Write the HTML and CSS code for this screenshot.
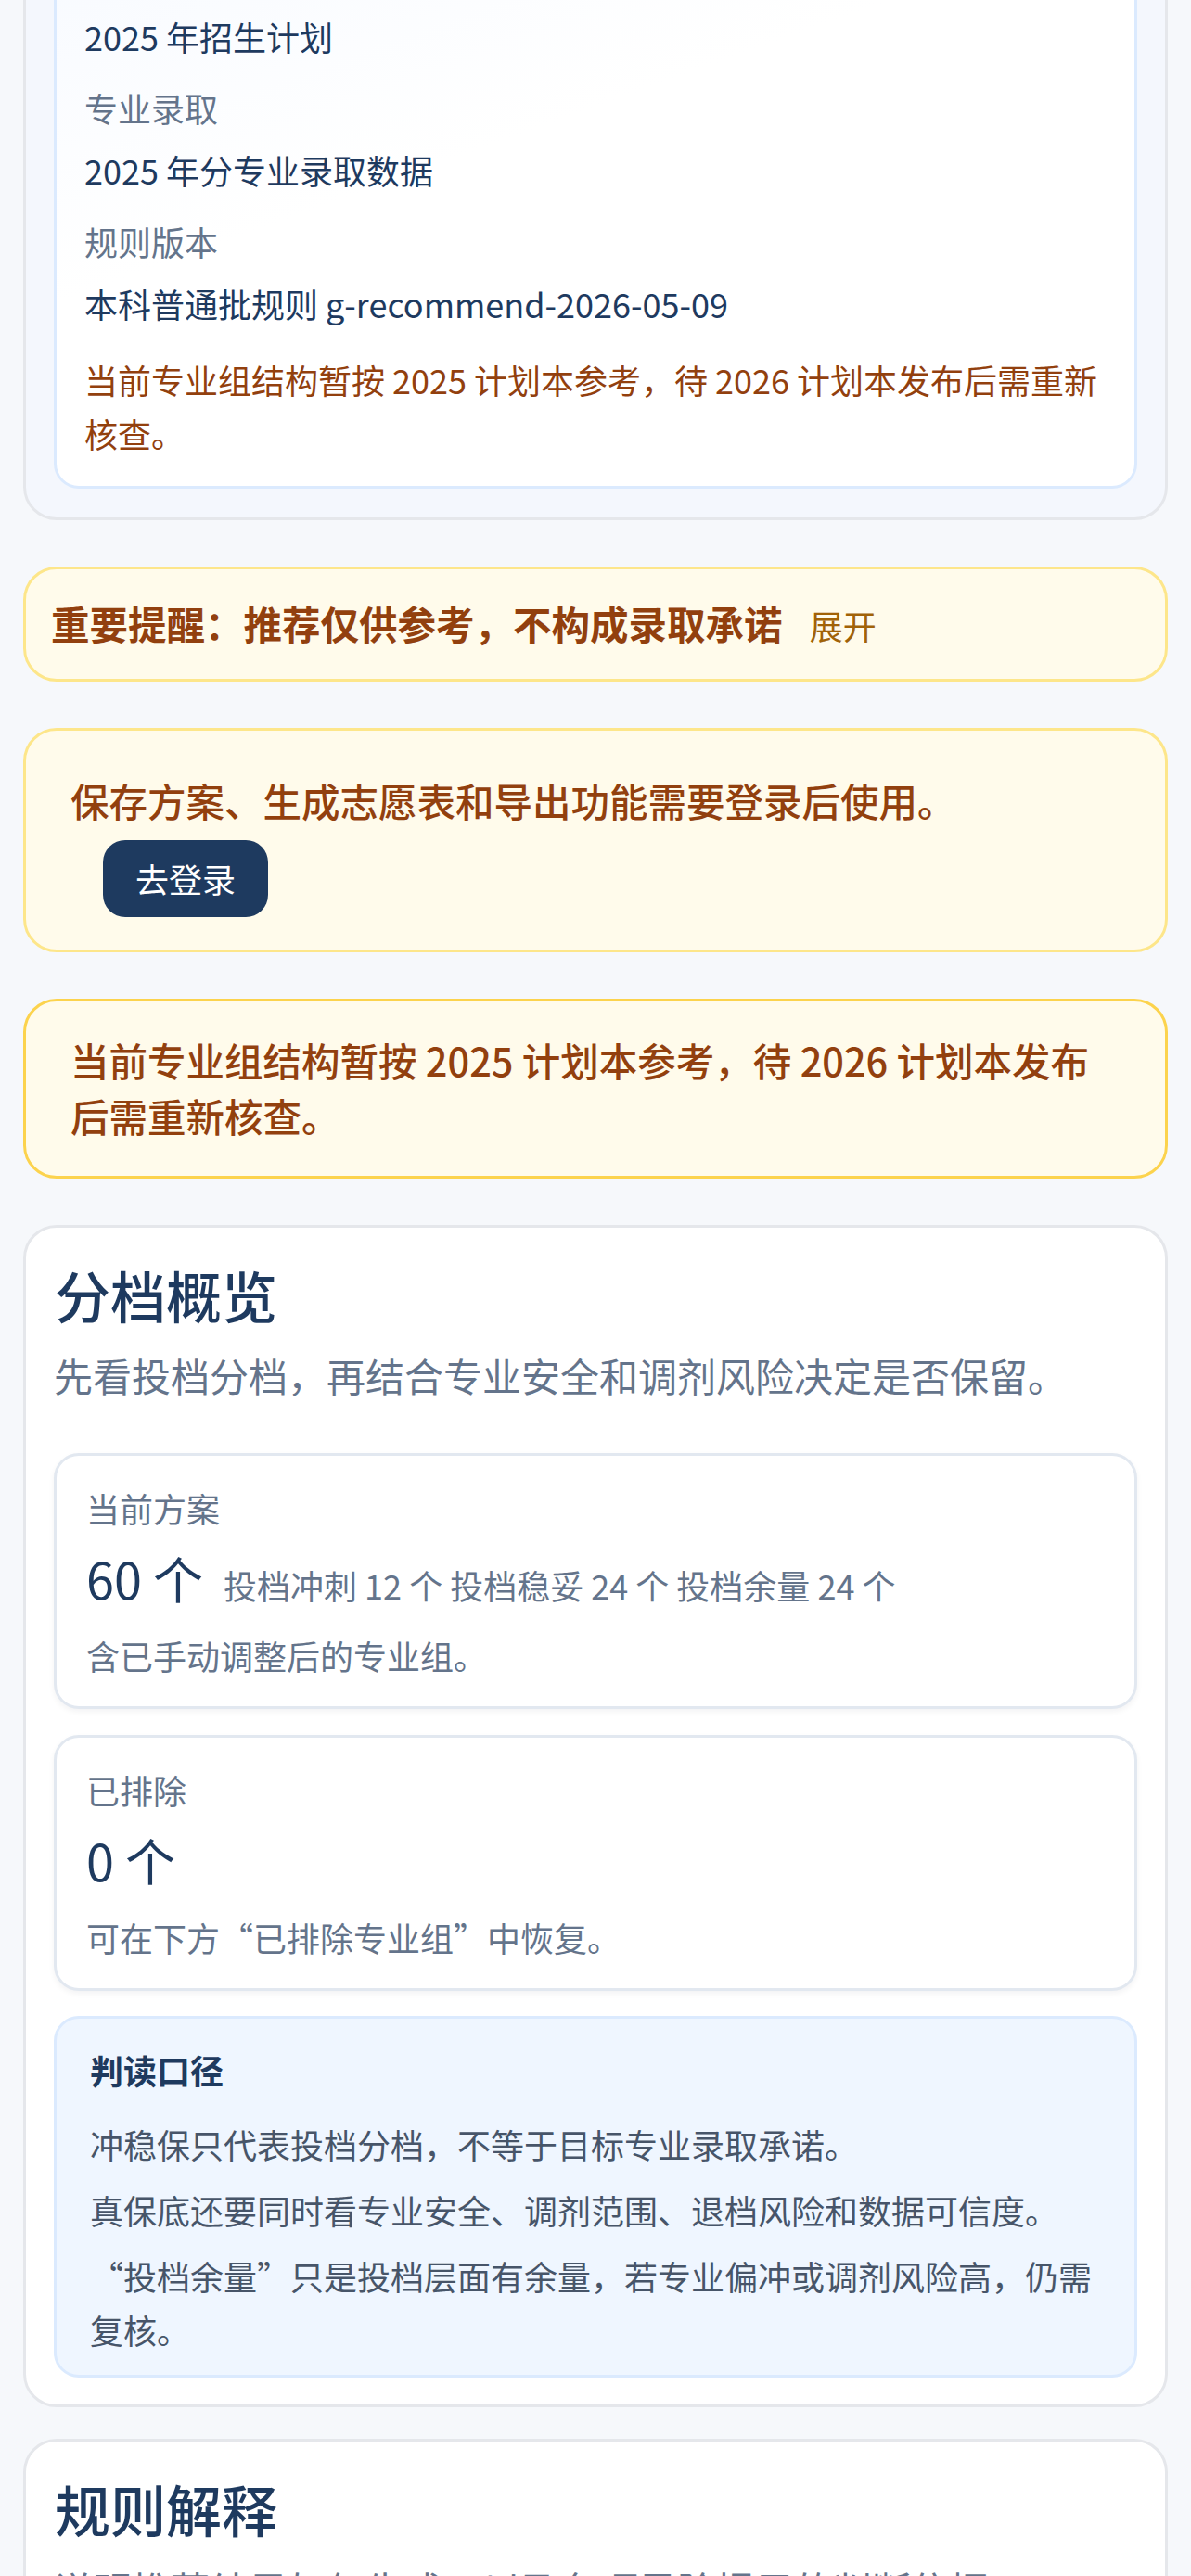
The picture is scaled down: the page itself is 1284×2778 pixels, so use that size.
FILE: index.html
```html
<!DOCTYPE html>
<html lang="zh-CN">
<head>
    <meta charset="UTF-8">
    <meta name="viewport" content="width=device-width, initial-scale=1.0">
    <title>志愿推荐 - 分档概览</title>
    <link rel="stylesheet" href="styles.css">
</head>
<body>
<div class="page">

    <!-- 数据来源 -->
    <section class="source">
        <div class="source-box">
            <dl class="source-list">
                <dt>招生计划</dt>
                <dd>2025 年招生计划</dd>
                <dt>专业录取</dt>
                <dd>2025 年分专业录取数据</dd>
                <dt>规则版本</dt>
                <dd>本科普通批规则 g-recommend-2026-05-09</dd>
            </dl>
            <p class="source-warn">当前专业组结构暂按 2025 计划本参考，待 2026 计划本发布后需重新核查。</p>
        </div>
    </section>

    <div class="notice notice-tip">
        <strong>重要提醒：推荐仅供参考，不构成录取承诺</strong>
        <span class="toggle">展开</span>
    </div>

    <div class="notice notice-login">
        <p class="notice-text">保存方案、生成志愿表和导出功能需要登录后使用。</p>
        <button type="button" class="login-btn">去登录</button>
    </div>

    <div class="notice notice-strong">
        <p class="notice-text">当前专业组结构暂按 2025 计划本参考，待 2026 计划本发布后需重新核查。</p>
    </div>

    <!-- 分档概览 -->
    <section class="card">
        <h2 class="card-title">分档概览</h2>
        <p class="card-sub">先看投档分档，再结合专业安全和调剂风险决定是否保留。</p>

        <div class="stat-card">
            <div class="stat-label">当前方案</div>
            <div class="stat-value">
                <span class="stat-num">60 个</span>
                <span class="stat-meta">投档冲刺 12 个 投档稳妥 24 个 投档余量 24 个</span>
            </div>
            <div class="stat-note">含已手动调整后的专业组。</div>
        </div>

        <div class="stat-card">
            <div class="stat-label">已排除</div>
            <div class="stat-value">
                <span class="stat-num">0 个</span>
            </div>
            <div class="stat-note">可在下方“已排除专业组”中恢复。</div>
        </div>

        <div class="explain">
            <h3 class="explain-title">判读口径</h3>
            <p>冲稳保只代表投档分档，不等于目标专业录取承诺。</p>
            <p>真保底还要同时看专业安全、调剂范围、退档风险和数据可信度。</p>
            <p>“投档余量”只是投档层面有余量，若专业偏冲或调剂风险高，仍需复核。</p>
        </div>
    </section>

    <!-- 规则解释 -->
    <section class="card card-next">
        <h2 class="card-title">规则解释</h2>
        <p class="card-sub">说明推荐结果如何生成，以及各项风险提示的判断依据。</p>
        <p class="card-sub">分档依据位次差、计划变化和历年录取波动综合计算。</p>
    </section>

</div>
</body>
</html>
```

FILE: styles.css
```css
body {
    margin: 0;
    background-color: #f6f8fb;
    font-family: "Noto Sans CJK SC", "Noto Sans", sans-serif;
    color: #1e3a5f;
}
p, h2, h3, dl, dd { margin: 0; }

/* page is shown scrolled: top of the source card sits above the viewport */
.page {
    padding: 0 25px 60px;
    margin-top: -121px;
}

/* 数据来源 */
.source {
    background-color: #f4f7fd;
    border: 3px solid #e5e7eb;
    border-radius: 36px;
    padding: 30px 30px 31px;
}
.source-box {
    background: linear-gradient(160deg, #f7faff 0%, #ffffff 40%);
    border: 3px solid #dbeafe;
    border-radius: 27px;
    padding: 30px 30px 28px;
}
.source-list dt {
    font-size: 36px;
    line-height: 54px;
    color: #64748b;
    margin-top: 23px;
}
.source-list dt:first-child { margin-top: 0; }
.source-list dd {
    font-size: 36px;
    line-height: 54px;
    margin-top: 13px;
    color: #1e3a5f;
}
.source-warn {
    margin-top: 27px;
    font-size: 36px;
    line-height: 57.6px;
    color: #92400e;
}

/* 提醒条 */
.notice {
    margin-top: 50px;
    background-color: #fffbeb;
    border: 3px solid #fde68a;
    border-radius: 36px;
    padding: 27px;
    color: #92400e;
    font-size: 41.5px;
    line-height: 62px;
}
.notice-tip strong { font-weight: 700; }
.toggle {
    margin-left: 20px;
    font-size: 36px;
    color: #a16207;
}
.notice-text {
    margin-left: 21px;
    margin-right: 33px;
    font-weight: 500;
}
.notice-login { padding-bottom: 35px; }
.notice-login .notice-text { margin-top: 17px; margin-bottom: 12px; }
.login-btn {
    display: block;
    margin-left: 56px;
    background-color: #1e3a5f;
    color: #fff;
    border: none;
    border-radius: 24px;
    padding: 14px 35px 15px;
    font-family: inherit;
    font-size: 36px;
    line-height: 54px;
    cursor: pointer;
}
.notice-strong { border-color: #fcd34d; }
.notice-strong .notice-text {
    line-height: 60px;
    margin-top: 6px;
    margin-bottom: 8px;
}

/* 卡片 */
.card {
    margin-top: 50px;
    background-color: #fff;
    border: 3px solid #e5e7eb;
    border-radius: 36px;
    padding: 33px 30px 29px;
}
.card-next { margin-top: 34px; }
.card-title {
    font-size: 60px;
    line-height: 78px;
    font-weight: 500;
    color: #1e3a5f;
    margin-left: 1px;
}
.card-sub {
    margin-top: 16px;
    font-size: 42px;
    line-height: 63px;
    color: #64748b;
}
.card-next .card-sub + .card-sub { margin-top: 10px; }

.stat-card {
    margin-top: 28px;
    background-color: #fff;
    border: 3px solid #e2e8f0;
    border-radius: 27px;
    padding: 29px 32px 28px;
    box-shadow: 0 3px 6px rgba(15, 23, 42, 0.05);
}
.card-sub + .stat-card { margin-top: 53px; }
.stat-label {
    font-size: 36px;
    line-height: 54px;
    color: #64748b;
}
.stat-value {
    display: flex;
    align-items: baseline;
    height: 72px;
    margin-top: 13px;
    line-height: 72px;
}
.stat-num {
    font-size: 54px;
    color: #1e3a5f;
}
.stat-meta {
    margin-left: 22px;
    font-size: 36px;
    color: #64748b;
}
.stat-note {
    margin-top: 20px;
    font-size: 36px;
    line-height: 54px;
    color: #64748b;
}

.explain {
    margin-top: 27px;
    background-color: #eff6ff;
    border: 3px solid #dbeafe;
    border-radius: 27px;
    padding: 28px 36px 20px;
    color: #475569;
}
.explain-title {
    font-size: 36px;
    line-height: 54px;
    font-weight: 700;
    color: #1e3a5f;
    margin-bottom: 24px;
}
.explain p {
    font-size: 36px;
    line-height: 58px;
}
.explain p + p { margin-top: 13px; }
```
